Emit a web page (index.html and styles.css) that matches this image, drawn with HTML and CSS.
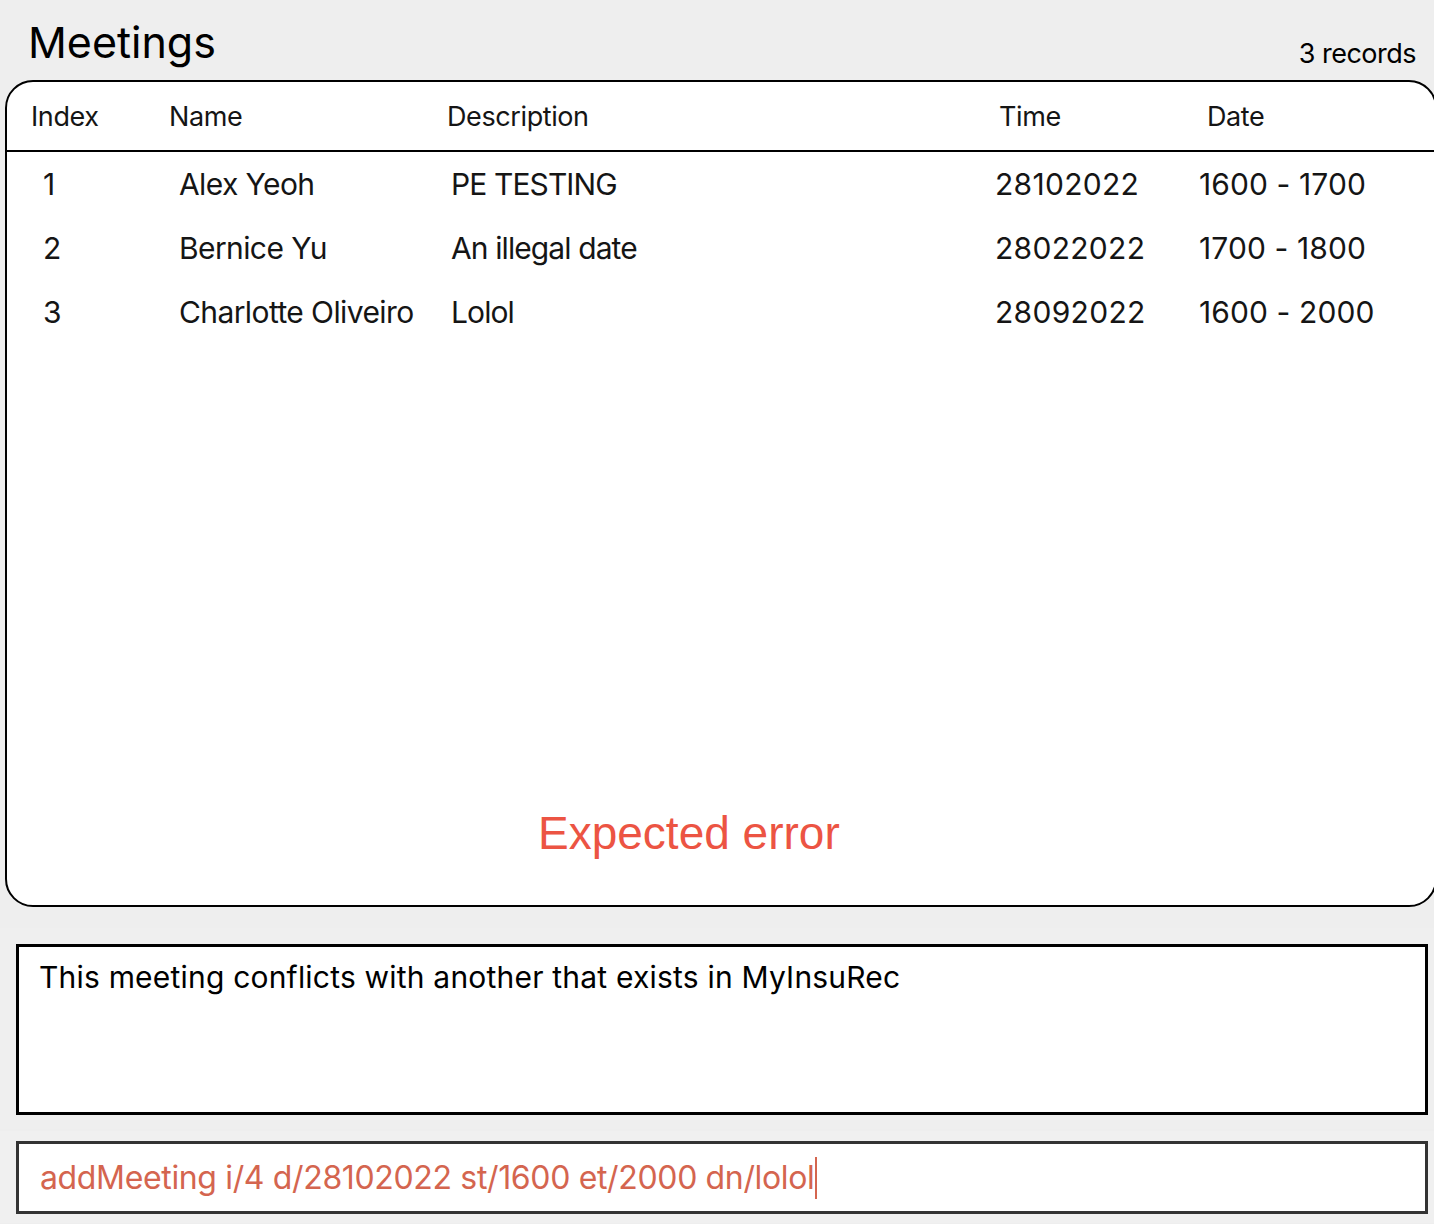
FILE: index.html
```html
<!DOCTYPE html>
<html>
<head>
<meta charset="utf-8">
<link rel="stylesheet" href="styles.css">
</head>
<body>
<div class="app">
  <div class="top">
    <h1 class="title">Meetings</h1>
    <span class="count">3 records</span>
  </div>
  <div class="card">
    <div class="thead">
      <div class="h c1">Index</div>
      <div class="h c2">Name</div>
      <div class="h c3">Description</div>
      <div class="h c4">Time</div>
      <div class="h c5">Date</div>
    </div>
    <div class="row">
      <div class="d c1">1</div>
      <div class="d c2">Alex Yeoh</div>
      <div class="d c3">PE TESTING</div>
      <div class="d c4">28102022</div>
      <div class="d c5">1600 - 1700</div>
    </div>
    <div class="row">
      <div class="d c1">2</div>
      <div class="d c2">Bernice Yu</div>
      <div class="d c3">An illegal date</div>
      <div class="d c4">28022022</div>
      <div class="d c5">1700 - 1800</div>
    </div>
    <div class="row">
      <div class="d c1">3</div>
      <div class="d c2">Charlotte Oliveiro</div>
      <div class="d c3">Lolol</div>
      <div class="d c4">28092022</div>
      <div class="d c5">1600 - 2000</div>
    </div>
    <div class="error">Expected error</div>
  </div>
  <div class="result-section">
    <div class="result">This meeting conflicts with another that exists in MyInsuRec</div>
  </div>
  <div class="cmd-section">
    <div class="cmd"><span class="cmd-text">addMeeting i/4 d/28102022 st/1600 et/2000 dn/lolol</span><span class="caret"></span></div>
  </div>
</div>
</body>
</html>
```

FILE: styles.css
```css
html, body {
  margin: 0;
  padding: 0;
  background: #eeeeee;
  overflow: hidden;
}
body {
  width: 1434px;
  height: 1224px;
  font-family: Inter, "Noto Sans", sans-serif;
  color: #111;
}
.app {
  display: flex;
  flex-direction: column;
}
.top {
  height: 80px;
  display: flex;
  justify-content: space-between;
  align-items: flex-end;
  padding: 0 18px 0 28px;
}
.title {
  margin: 0;
  font-weight: 400;
  font-size: 43px;
  line-height: 50px;
  letter-spacing: 0;
  align-self: flex-start;
  margin-top: 17px;
  color: #000;
}
.count {
  font-size: 27px;
  line-height: 32px;
  margin-bottom: 10px;
  letter-spacing: -0.5px;
  color: #000;
}
.card {
  margin-left: 5px;
  width: 1432px;
  height: 827px;
  box-sizing: border-box;
  border: 2px solid #000;
  border-radius: 28px;
  background: #fff;
  display: flex;
  flex-direction: column;
}
.thead, .row {
  display: grid;
  grid-template-columns: 150px 285px 550px 205px 1fr;
  align-items: center;
}
.thead {
  height: 68px;
  border-bottom: 2px solid #000;
}
.row {
  height: 64px;
}
.row:first-of-type { margin-top: 2px; }
.h {
  font-size: 27px;
  letter-spacing: -0.4px;
  color: #151515;
}
.d {
  font-size: 30px;
  letter-spacing: -0.6px;
  color: #151515;
}
.thead .c1 { padding-left: 24px; }
.thead .c2 { padding-left: 12px; }
.thead .c3 { padding-left: 5px; }
.thead .c4 { padding-left: 7px; }
.thead .c5 { padding-left: 10px; }
.row .c1 { padding-left: 36px; }
.row .c2 { padding-left: 22px; }
.row .c3 { padding-left: 9px; letter-spacing: -0.9px; }
.row .c4 { padding-left: 3px; letter-spacing: 0.3px; }
.row .c5 { padding-left: 2px; letter-spacing: 0.1px; }
.error {
  margin-top: auto;
  padding-left: 531px;
  padding-bottom: 46px;
  font-family: "Liberation Sans", Arial, sans-serif;
  font-size: 46px;
  line-height: 52px;
  color: #ec5443;
}
.result-section {
  margin-top: 21px;
  background: #efefef;
  padding: 16px 6px 14px 16px;
}
.result {
  height: 171px;
  box-sizing: border-box;
  border: 3px solid #000;
  background: #fff;
  padding: 10px 20px;
  font-size: 30px;
  line-height: 40px;
  letter-spacing: 0.2px;
  color: #000;
}
.cmd-section {
  margin-top: 2px;
  background: #f0f0f0;
  padding: 10px 6px 9px 16px;
}
.cmd {
  height: 73px;
  box-sizing: border-box;
  border: 3px solid #333;
  background: #fff;
  padding: 0 21px;
  display: flex;
  align-items: center;
}
.cmd-text {
  font-size: 32px;
  letter-spacing: -0.35px;
  color: #d4654f;
}
.caret {
  width: 2px;
  height: 42px;
  background: #d4654f;
  margin-left: 1px;
}
```
